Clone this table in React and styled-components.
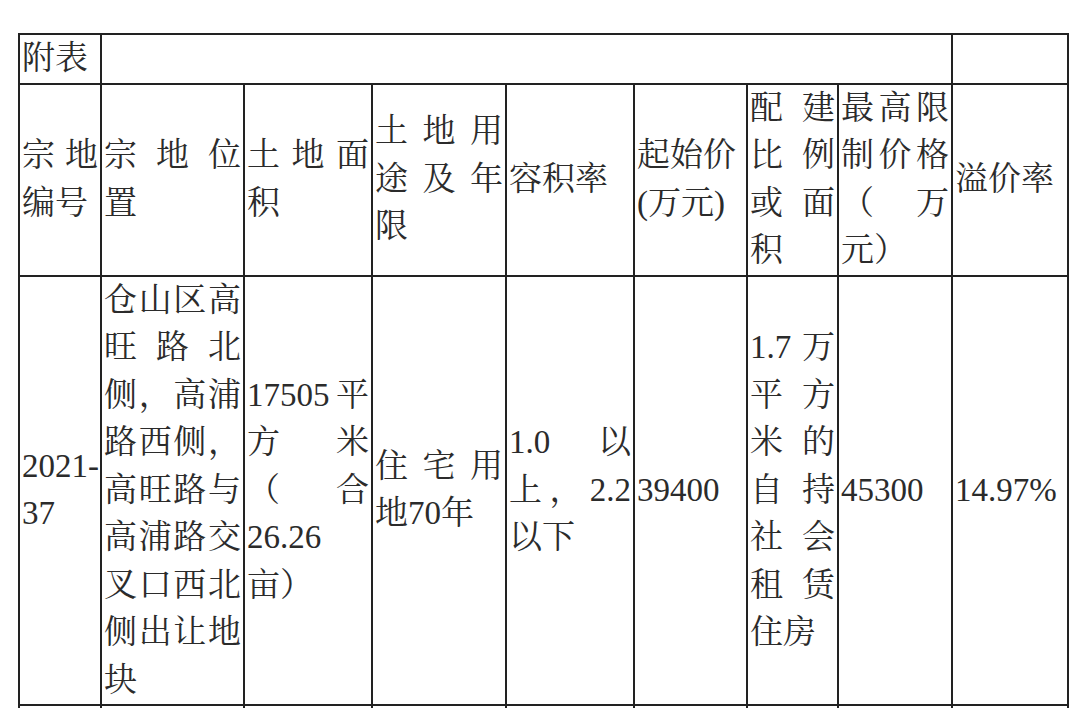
import React from "react";
import styled, { createGlobalStyle } from "styled-components";

const Global = createGlobalStyle`
  html, body { margin: 0; padding: 0; background: #ffffff; }
  body {
    font-family: "Liberation Serif", "Noto Serif CJK SC", "Noto Sans CJK SC", serif;
    color: #2b2b2b;
  }
`;

const Page = styled.div`
  padding: 33px 0 0 18px;
  height: 708px;
  box-sizing: border-box;
  overflow: hidden;
`;

const Table = styled.table`
  border-collapse: collapse;
  table-layout: fixed;
  width: 1049px;
  font-size: 33px;
  line-height: 47.5px;
`;

const Cell = styled.td`
  border: 2px solid #222222;
  padding: 0 2px;
  vertical-align: middle;
  text-align: left;
  height: ${(p) => (p.$h ? `${p.$h}px` : "auto")};
`;

const Line = styled.div`
  text-align: ${(p) => (p.$spread ? "justify" : "left")};
  text-align-last: ${(p) => (p.$spread ? "justify" : "auto")};
  text-justify: inter-character;
`;

const widths = [82, 143, 128, 134, 128, 113, 91, 114, 116];

const header = [
  [["宗地", 1], ["编号"]],
  [["宗地位", 1], ["置"]],
  [["土地面", 1], ["积"]],
  [["土地用", 1], ["途及年", 1], ["限"]],
  [["容积率"]],
  [["起始价"], ["(万元)"]],
  [["配建", 1], ["比例", 1], ["或面", 1], ["积"]],
  [["最高限", 1], ["制价格", 1], ["（万", 1], ["元）"]],
  [["溢价率"]],
];

const body = [
  [["2021-"], ["37"]],
  [
    ["仓山区高", 1],
    ["旺路北", 1],
    ["侧，高浦", 1],
    ["路西侧，", 1],
    ["高旺路与", 1],
    ["高浦路交", 1],
    ["叉口西北", 1],
    ["侧出让地", 1],
    ["块"],
  ],
  [["17505平", 1], ["方米", 1], ["（合", 1], ["26.26"], ["亩）"]],
  [["住宅用", 1], ["地70年"]],
  [["1.0 以", 1], ["上，2.2", 1], ["以下"]],
  [["39400"]],
  [
    ["1.7万", 1],
    ["平方", 1],
    ["米的", 1],
    ["自持", 1],
    ["社会", 1],
    ["租赁", 1],
    ["住房"],
  ],
  [["45300"]],
  [["14.97%"]],
];

const Lines = ({ lines }) =>
  lines.map(([text, spread], i) => (
    <Line key={i} $spread={!!spread}>
      {text}
    </Line>
  ));

export default function App() {
  return (
    <>
      <Global />
      <Page>
        <Table>
          <colgroup>
            {widths.map((w, i) => (
              <col key={i} style={{ width: w }} />
            ))}
          </colgroup>
          <tbody>
            <tr>
              <Cell>
                <Line>附表</Line>
              </Cell>
              <Cell colSpan={7} />
              <Cell />
            </tr>
            <tr>
              {header.map((lines, i) => (
                <Cell key={i}>
                  <Lines lines={lines} />
                </Cell>
              ))}
            </tr>
            <tr>
              {body.map((lines, i) => (
                <Cell key={i}>
                  <Lines lines={lines} />
                </Cell>
              ))}
            </tr>
            <tr>
              {widths.map((_, i) => (
                <Cell key={i} $h={80} />
              ))}
            </tr>
          </tbody>
        </Table>
      </Page>
    </>
  );
}
